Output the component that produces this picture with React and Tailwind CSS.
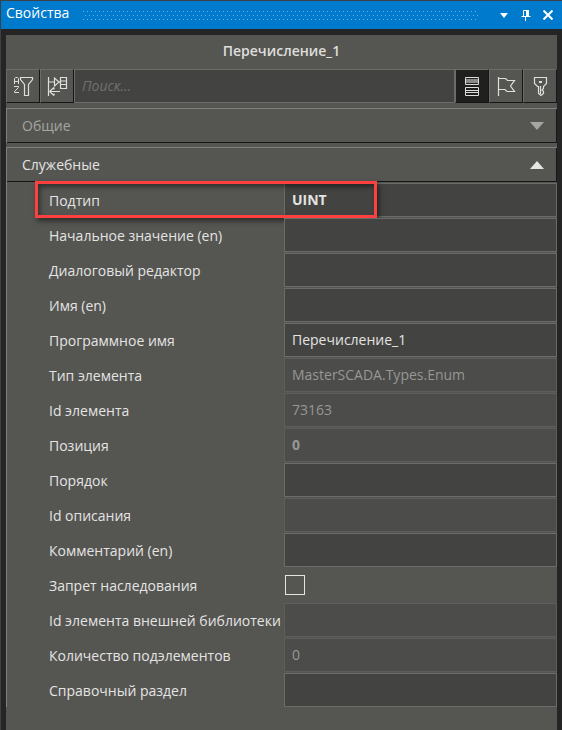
import { useState } from "react";

const FIELDS = [
  { id: "subtype", label: "Подтип", value: "UINT", bold: true, marked: true },
  { id: "initial", label: "Начальное значение (en)", value: "" },
  { id: "dialog", label: "Диалоговый редактор", value: "" },
  { id: "name", label: "Имя (en)", value: "" },
  { id: "program-name", label: "Программное имя", value: "Перечисление_1" },
  { id: "type", label: "Тип элемента", value: "MasterSCADA.Types.Enum", disabled: true },
  { id: "element-id", label: "Id элемента", value: "73163", disabled: true },
  { id: "position", label: "Позиция", value: "0", bold: true, disabled: true },
  { id: "order", label: "Порядок", value: "" },
  { id: "description-id", label: "Id описания", value: "", disabled: true },
  { id: "comment", label: "Комментарий (en)", value: "" },
  { id: "no-inherit", label: "Запрет наследования", type: "checkbox" },
  { id: "library-id", label: "Id элемента внешней библиотеки", value: "", disabled: true },
  { id: "children", label: "Количество подэлементов", value: "0", disabled: true },
  { id: "help", label: "Справочный раздел", value: "" },
];

function SortFilterIcon() {
  return (
    <svg width="22" height="22" viewBox="0 0 22 22" fill="none" stroke="currentColor">
      <path d="M2.5 9V3.5l1-1h2l1 1V9M2.5 6.5h4" />
      <path d="M2 11.5h4.5v1l-4 4v1H7" />
      <path d="M8.5 2.5h12v2l-4 5v11h-4v-11l-4-5z" strokeWidth="1.2" />
    </svg>
  );
}

function LinksIcon() {
  return (
    <svg width="22" height="22" viewBox="0 0 22 22" fill="none" stroke="currentColor" strokeWidth="1.2">
      <path d="M2.5 2v19M3 7h5M13 7h1.5" />
      <path d="M8.5 3v8l4.5-4z" />
      <path d="M14.5 2.5h6v11h-6zM14.5 6h6M14.5 9.5h6" />
      <path d="M3.5 16.5l4.5-4M3.5 16.5l4.5 4M8 12.5v2M8 18.5v2M4 16.5h10" />
    </svg>
  );
}

function CategoriesIcon() {
  return (
    <svg width="22" height="22" viewBox="0 0 22 22" fill="none" stroke="currentColor">
      <path d="M5 4h12v4H5z" fill="#8b8b88" stroke="none" />
      <path d="M4.5 2.5h13v7h-13zM4.5 12.5h13v8h-13z" />
      <path d="M5 15.5h12M5 17.5h12" />
    </svg>
  );
}

function FlagIcon() {
  return (
    <svg width="22" height="22" viewBox="0 0 22 22" fill="none" stroke="currentColor" strokeWidth="1.2">
      <path d="M3.5 2v19M3.5 3.5h7l2 2h7l-4 5.5 4 5.5H12l-2-2H3.5" />
    </svg>
  );
}

function KeyIcon() {
  return (
    <svg width="22" height="22" viewBox="0 0 22 22" fill="none" stroke="currentColor" strokeWidth="1.2">
      <path d="M5.5 2.5h12v6l-3 3v2l-1.5 1.5 1.5 1.5v2L12 20.5l-2.5-2v-7h-1l-3-3z" />
      <path d="M10 6h3v2h-3z" fill="currentColor" stroke="none" />
      <path d="M11.5 11v8" />
    </svg>
  );
}

function GripDots() {
  return (
    <svg width="100%" height="9" className="min-w-0 flex-1 text-[#66b2e4]" aria-hidden="true">
      <defs>
        <pattern id="grip" width="4" height="8" patternUnits="userSpaceOnUse">
          <path d="M0 0h1v1H0zM2 4h1v1H2z" fill="currentColor" />
        </pattern>
      </defs>
      <rect width="100%" height="9" fill="url(#grip)" />
    </svg>
  );
}

function TitleButton({ label, children }) {
  return (
    <button type="button" aria-label={label} className="flex size-[22px] items-center justify-center">
      {children}
    </button>
  );
}

function ToolButton({ label, active, children }) {
  return (
    <button
      type="button"
      aria-label={label}
      className={`flex w-[34px] shrink-0 items-center justify-center border-t border-r border-b border-l border-t-[#6b6b69] border-r-[#161616] border-b-[#161616] border-l-[#6b6b69] text-[#dededc] ${
        active ? "bg-[#20201f]" : "bg-[#555552]"
      }`}
    >
      {children}
    </button>
  );
}

function SectionHeader({ title, open, onClick }) {
  return (
    <button
      type="button"
      aria-expanded={open}
      onClick={onClick}
      className={`flex h-[34px] w-full items-center justify-between border-r border-b border-[#161616] pr-3 pl-[15px] ${
        open ? "text-[#e4e4e2]" : "text-[#a5a5a3]"
      }`}
    >
      <span>{title}</span>
      <svg width="14" height="8" viewBox="0 0 14 8" fill="currentColor">
        <path d={open ? "M7 0l7 8H0z" : "M0 0h14L7 8z"} />
      </svg>
    </button>
  );
}

function FieldRow({ field }) {
  const { id, label, value, type, bold, disabled, marked } = field;

  return (
    <div className="relative flex h-[34px] items-center">
      <label htmlFor={id} className="w-[277px] shrink-0 pt-px pl-[42px] whitespace-nowrap text-[#e4e4e2]">
        {label}
      </label>
      {type === "checkbox" ? (
        <input
          id={id}
          type="checkbox"
          className="ml-px size-5 appearance-none border border-[#e4e4e2] checked:bg-[#e4e4e2]"
        />
      ) : (
        <input
          id={id}
          type="text"
          defaultValue={value}
          disabled={disabled}
          className={`h-full min-w-0 flex-1 border px-[7px] pb-px outline-none ${bold ? "font-bold" : ""} ${
            disabled
              ? "border-[#5d5d5b] bg-[#4c4c4a] text-[#979795]"
              : "border-[#6b6b69] bg-[#434341] text-[#e4e4e2]"
          }`}
        />
      )}
      {marked && (
        <div className="pointer-events-none absolute -top-[2px] left-7 h-[37px] w-[342px] border-[3px] border-[#ff4040] shadow-[2px_3px_5px_rgba(0,0,0,0.5),inset_2px_3px_5px_rgba(0,0,0,0.45)]" />
      )}
    </div>
  );
}

export default function App() {
  const [commonOpen, setCommonOpen] = useState(false);
  const [serviceOpen, setServiceOpen] = useState(true);

  return (
    <div className="flex min-h-screen flex-col border-t border-l border-[#3f3f46] bg-[#252526] font-['Open_Sans','Noto_Sans',sans-serif] text-[14px] leading-5">
      <header className="flex h-7 items-center bg-[#007acc] pr-[3px] pl-[5px] text-white">
        <h1 className="w-[77px] shrink-0 pb-1">Свойства</h1>
        <GripDots />
        <div className="ml-[14px] flex items-center">
          <TitleButton label="Меню">
            <svg width="8" height="5" viewBox="0 0 8 5" fill="currentColor">
              <path d="M0 0h8L4 5z" />
            </svg>
          </TitleButton>
          <TitleButton label="Закрепить">
            <svg width="10" height="12" viewBox="0 0 10 12" fill="none" stroke="currentColor">
              <path d="M2.5 7V1.5h5V7M0.5 7.5h9M4.5 8v4" />
              <path d="M5 1h3v6H5z" fill="currentColor" stroke="none" />
            </svg>
          </TitleButton>
          <TitleButton label="Закрыть">
            <svg width="10" height="10" viewBox="0 0 10 10" stroke="currentColor" strokeWidth="2">
              <path d="M0.5 0.5l9 9M9.5 0.5l-9 9" />
            </svg>
          </TitleButton>
        </div>
      </header>

      <main className="mt-[6px] mr-[5px] ml-[5px] flex-1 bg-[#555552]">
        <h2 className="flex h-[34px] items-center justify-center pb-[2px] font-semibold text-[#dededc]">
          Перечисление_1
        </h2>

        <div className="flex h-[34px]">
          <ToolButton label="Сортировка и фильтр">
            <SortFilterIcon />
          </ToolButton>
          <ToolButton label="Связи">
            <LinksIcon />
          </ToolButton>
          <input
            type="search"
            aria-label="Поиск"
            placeholder="Поиск..."
            className="min-w-0 flex-1 border border-[#6b6b69] bg-[#434341] px-[7px] text-[#e4e4e2] outline-none placeholder:text-[#71716f] placeholder:italic"
          />
          <ToolButton label="По категориям" active>
            <CategoriesIcon />
          </ToolButton>
          <ToolButton label="Флаг">
            <FlagIcon />
          </ToolButton>
          <ToolButton label="Ключ">
            <KeyIcon />
          </ToolButton>
        </div>

        <section className="mt-[5px] border-t border-l border-[#80807e]">
          <SectionHeader title="Общие" open={commonOpen} onClick={() => setCommonOpen(!commonOpen)} />
        </section>

        <section className="mt-1 border-t border-l border-[#80807e]">
          <SectionHeader title="Служебные" open={serviceOpen} onClick={() => setServiceOpen(!serviceOpen)} />
          {serviceOpen && (
            <div className="flex flex-col gap-px pt-px">
              {FIELDS.map((field) => (
                <FieldRow key={field.id} field={field} />
              ))}
            </div>
          )}
        </section>
      </main>
    </div>
  );
}
